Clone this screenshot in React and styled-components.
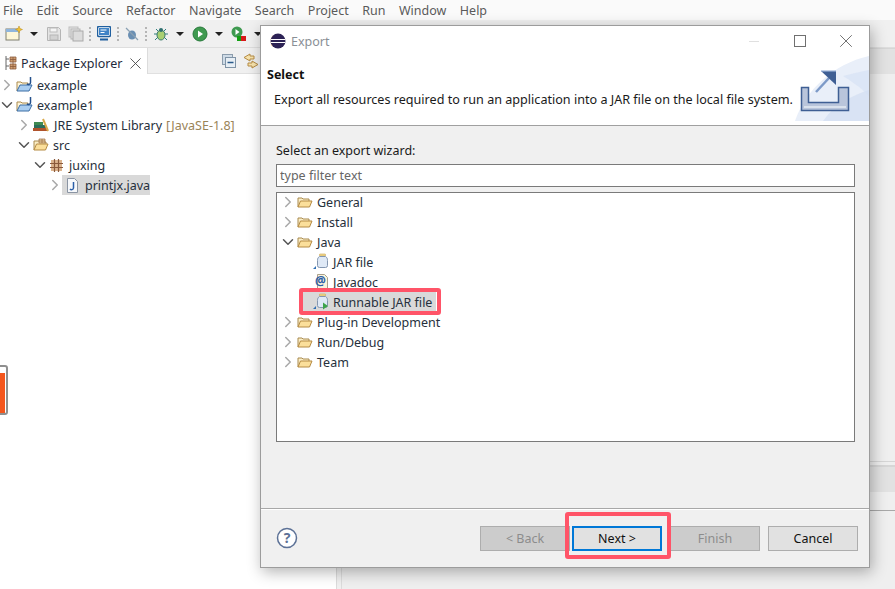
import styled, { createGlobalStyle } from "styled-components";
import { ChevronRight, ChevronDown, X } from "lucide-react";

const Global = createGlobalStyle`
  html, body { margin: 0; padding: 0; background: #fff; overflow: hidden; }
  body { font-family: "Noto Sans", "Open Sans", sans-serif; font-size: 12.5px; color: #1c1c1c; }
`

const Page = styled.div`
  position: relative;
  width: 895px;
  height: 589px;
  overflow: hidden;
  display: flex;
  flex-direction: column;
`
const MenuBar = styled.div`
  height: 20px;
  display: flex;
  align-items: center;
  padding-left: 3px;
  gap: 13.5px;
  background: #fafafa;
  color: #5a5a5a;
`
const Toolbar = styled.div`
  height: 28px;
  background: #f0f0f0;
  border-bottom: 1px solid #dedede;
  display: flex;
  align-items: center;
  padding-left: 5px;
  box-sizing: border-box;
`
const ToolIcon = styled.svg`
  flex: none;
  margin-right: ${({ $gap }) => $gap ?? 0}px;
`
const Caret = styled.span`
  flex: none;
  width: 0;
  height: 0;
  border-left: 4px solid transparent;
  border-right: 4px solid transparent;
  border-top: 4px solid #222;
  margin: 0 8px 0 7px;
`
const Grip = styled.span`
  flex: none;
  width: 2px;
  height: 14px;
  margin: 0 6px 0 5px;
  background: repeating-linear-gradient(#b5b5b5 0 2px, transparent 2px 4px);
`
const Workbench = styled.div`
  flex: 1;
  display: flex;
  min-height: 0;
`
const LeftPane = styled.div`
  width: 336px;
  flex: none;
  display: flex;
  flex-direction: column;
`
const Sash = styled.div`
  width: 6px;
  flex: none;
  box-sizing: border-box;
  background: #f0f0f0;
  border-left: 1px solid #dcdcdc;
  border-right: 1px solid #dcdcdc;
`
const TabStrip = styled.div`
  height: 26px;
  flex: none;
  background: #f0f0f0;
  border-bottom: 1px solid #e0e0e0;
  display: flex;
  box-sizing: border-box;
`
const Tab = styled.div`
  width: 148px;
  height: 26px;
  box-sizing: border-box;
  background: #fff;
  border-right: 1px solid #dcdcdc;
  display: flex;
  align-items: center;
  padding: 4px 0 0 5px;
  gap: 4px;
  color: #1f2a3a;
`
const TabActions = styled.div`
  margin-left: 74px;
  display: flex;
  align-items: center;
  gap: 7px;
`
const ExplorerTree = styled.div`
  padding-top: 1px;
`
const RightPane = styled.div`
  flex: 1;
  background: #efefef;
  display: flex;
  flex-direction: column;
`
const Band = styled.div`
  height: 26px;
  flex: none;
  box-sizing: border-box;
  background: #e2e2e2;
  border-top: 1px solid #d6d6d6;
`
const Filler = styled.div`
  flex: 1;
`
const LowerStrip = styled.div`
  height: 5px;
  flex: none;
  border-top: 1px solid #d6d6d6;
  border-bottom: 1px solid #d6d6d6;
  box-sizing: border-box;
`
const LowerGap = styled.div`
  height: 19px;
  flex: none;
  box-sizing: border-box;
  border-bottom: 1px solid #a8a8a8;
`
const LowerRest = styled.div`
  height: 78px;
  flex: none;
`
const Row = styled.div`
  height: 20px;
  display: flex;
  align-items: center;
  padding-left: ${({ $left }) => $left}px;
  white-space: nowrap;
  color: #26303c;
`
const Twisty = styled.span`
  width: 14px;
  height: 14px;
  flex: none;
  display: flex;
  align-items: center;
  justify-content: center;
  color: ${({ $open }) => ($open ? "#555" : "#a8a8a8")};
  svg { flex: none; }
`
const Selected = styled.span`
  display: flex;
  align-items: center;
  height: 20px;
  gap: ${({ $gap }) => $gap ?? 4}px;
  padding: 0 ${({ $end }) => $end ?? 4}px 0 ${({ $pad }) => $pad ?? 2}px;
  background: ${({ $on }) => ($on ? "#d9d9d9" : "transparent")};
`
const Qualifier = styled.span`
  color: #9a8458;
  margin-left: 4px;
`
const Dialog = styled.div`
  position: absolute;
  left: 260px;
  top: 25px;
  width: 610px;
  height: 543px;
  box-sizing: border-box;
  background: #f0f0f0;
  border: 1px solid #9c9c9c;
  box-shadow: 2px 4px 14px rgba(0, 0, 0, 0.3);
  display: flex;
  flex-direction: column;
`
const TitleBar = styled.div`
  height: 30px;
  flex: none;
  background: #fff;
  display: flex;
  align-items: center;
  padding-left: 9px;
  gap: 5px;
  color: #8a8f96;
`
const WindowButtons = styled.div`
  margin-left: auto;
  display: flex;
  align-items: center;
  color: #666;
`
const WindowButton = styled.span`
  width: 46px;
  height: 30px;
  display: flex;
  align-items: center;
  justify-content: center;
`
const MinLine = styled.span`
  width: 10px;
  height: 1px;
  background: #e0e0e0;
`
const MaxBox = styled.span`
  width: 10px;
  height: 10px;
  border: 1px solid #707070;
`
const Banner = styled.div`
  position: relative;
  height: 70px;
  flex: none;
  box-sizing: border-box;
  background: #fff;
  border-bottom: 1px solid #a0a0a0;
  padding: 10px 0 0 6px;
  overflow: hidden;
`
const BannerTitle = styled.div`
  font-weight: 700;
  color: #111;
  line-height: 18px;
`
const BannerText = styled.div`
  margin: 7px 0 0 7px;
  font-size: 12.6px;
  line-height: 18px;
  white-space: nowrap;
  color: #1a1a1a;
`
const BannerArt = styled.svg`
  position: absolute;
  right: 0;
  top: 0;
`
const Content = styled.div`
  flex: 1;
  min-height: 0;
  display: flex;
  flex-direction: column;
  padding: 16px 14px 0 15px;
`
const FieldLabel = styled.div`
  height: 18px;
  line-height: 18px;
  color: #1a1a1a;
`
const Filter = styled.input`
  height: 23px;
  box-sizing: border-box;
  margin-top: 4px;
  padding: 0 3px;
  border: 1px solid #7a7a7a;
  background: #fff;
  font: inherit;
  outline: none;
  &::placeholder { color: #666; opacity: 1; }
`
const WizardTree = styled.div`
  position: relative;
  height: 250px;
  margin-top: 5px;
  box-sizing: border-box;
  flex: none;
  border: 1px solid #7a7a7a;
  background: #fff;
`
const WizardRows = styled.div`
  margin-top: -1px;
`
const Highlight = styled.span`
  position: absolute;
  box-sizing: border-box;
  border: 4px solid #ff5468;
  border-radius: 3px;
  pointer-events: none;
`
const RunnableMark = styled(Highlight)`
  left: -4px;
  right: -5px;
  top: -4px;
  bottom: -3px;
`
const NextMark = styled(Highlight)`
  left: -9px;
  right: -11px;
  top: -16px;
  bottom: -10px;
`
const RowAnchor = styled.span`
  position: relative;
  display: flex;
`
const Footer = styled.div`
  height: 59px;
  flex: none;
  box-sizing: border-box;
  border-top: 1px solid #a8a8a8;
  display: flex;
  align-items: center;
  padding: 0 11px 0 15px;
  box-shadow: inset 0 1px 0 #fff;
`
const Help = styled.svg`
  margin-right: auto;
`
const Buttons = styled.div`
  display: flex;
  margin-top: 1px;
`
const Button = styled.button`
  position: relative;
  z-index: ${({ $primary }) => ($primary ? 1 : 0)};
  width: 90px;
  height: 25px;
  padding: 0;
  margin-left: ${({ $gap }) => $gap ?? 8}px;
  font: inherit;
  border-radius: 0;
  border: ${({ $primary }) => ($primary ? "2px solid #0078d7" : "1px solid #adadad")};
  background: ${({ disabled }) => (disabled ? "#cccccc" : "#e1e1e1")};
  color: ${({ disabled }) => (disabled ? "#8c8c8c" : "#111")};
`
const SideTab = styled.div`
  position: absolute;
  left: -4px;
  top: 365px;
  width: 8px;
  height: 46px;
  background: #fff;
  border: 2px solid #8f8f8f;
  border-radius: 3px;
  &::before {
    content: "";
    position: absolute;
    left: 0;
    width: 7px;
    top: 6px;
    bottom: 0;
    background: #f4561d;
  }
`

const FolderOpen = () => (
  <svg width="16" height="14" viewBox="0 0 16 14">
    <path d="M1 12V3h4l1 1h6v2" fill="#fbeec6" stroke="#a98a4e" />
    <path d="M1 12l2.500-6H15l-2.500 6z" fill="#fbdf9b" stroke="#b58b44" />
  </svg>
)
const ProjectFolder = () => (
  <svg width="18" height="16" viewBox="0 0 18 16">
    <path d="M1 14V5h4l1 1h6v2" fill="#fff4d6" stroke="#a98a4e" />
    <path d="M1 14l3-6h12l-3 6z" fill="#a9cdf0" stroke="#3d6ea5" />
    <path d="M14.500 0v5.500a2 2 0 0 1-3.500 1.300" fill="none" stroke="#24508c" strokeWidth="1.500" />
  </svg>
)
const Library = () => (
  <svg width="17" height="14" viewBox="0 0 17 14">
    <rect x="0" y="10" width="15" height="3" fill="#b0532c" />
    <rect x="1" y="7" width="12" height="3" fill="#2c6d5b" />
    <rect x="1" y="4" width="9" height="3" fill="#3f8a52" />
    <path d="M10 1l5 12" stroke="#d9a94a" strokeWidth="2" />
  </svg>
)
const SrcFolder = () => (
  <svg width="16" height="14" viewBox="0 0 16 14">
    <path d="M1 12V3h5l1 1h6v2" fill="#fbeec6" stroke="#a98a4e" />
    <path d="M6 1h6v4H6zM9 1v4M6 3h6" fill="#e9d3a6" stroke="#9b6b3f" strokeWidth=".7" />
    <path d="M1 12l2.500-6H15l-2.500 6z" fill="#fbdf9b" stroke="#b58b44" />
  </svg>
)
const PackageIcon = () => (
  <svg width="13" height="13" viewBox="0 0 13 13">
    <rect x="1" y="1" width="11" height="11" fill="#dcb48e" />
    <path d="M0 4.500h13M0 8.500h13M4.500 0v13M8.500 0v13" stroke="#8a5a3c" strokeWidth="1.200" />
  </svg>
)
const JavaFile = () => (
  <svg width="13" height="15" viewBox="0 0 13 15">
    <path d="M1.500.5h7l3 3v11h-10z" fill="#f6f8fb" stroke="#8a94a3" />
    <path d="M7.500 4v6a2 2 0 0 1-3.500 1" fill="none" stroke="#2a5ea8" strokeWidth="1.500" />
  </svg>
)
const JarIcon = ({ $run }) => (
  <svg width="16" height="18" viewBox="0 0 16 18">
    <path d="M0 16l3-3v3z" fill="#2f6fb3" />
    <rect x="6.500" y="1" width="6" height="2" rx=".5" fill="#f2d98f" stroke="#c9a552" strokeWidth=".6" />
    <path d="M6.500 3.500h6c1.500 1 2 2 2 4v5a2 2 0 0 1-2 2h-6a2 2 0 0 1-2-2v-5c0-2 .5-3 2-4z" fill="#dfe9f6" stroke="#8396b0" />
    {$run && <path d="M10 9.500v7l5-3.500z" fill="#3da34a" />}
  </svg>
)
const JavadocIcon = () => (
  <svg width="16" height="18" viewBox="0 0 16 18">
    <path d="M4.500 1.500h7l3 3v11h-10z" fill="#fbf3dc" stroke="#a9a08a" />
    <text x="7.500" y="12" textAnchor="middle" fontSize="12" fontWeight="700" fill="#2a5ea8" fontFamily="Noto Sans">@</text>
    <path d="M1 16.500h8" stroke="#2f6fb3" strokeWidth="1.500" />
  </svg>
)

const Open = () => <ChevronDown size={18} strokeWidth={2} />
const Closed = () => <ChevronRight size={18} strokeWidth={2} />

const Node = ({ left, open, icon, children, on, gap, pad, end }) => (
  <Row $left={left}>
    <Twisty $open={open}>{open === undefined ? null : open ? <Open /> : <Closed />}</Twisty>
    <Selected $on={on} $gap={gap} $pad={pad} $end={end}>
      {icon}
      <span>{children}</span>
    </Selected>
  </Row>
)

const menus = ["File", "Edit", "Source", "Refactor", "Navigate", "Search", "Project", "Run", "Window", "Help"];
const groups = [
  ["General", false],
  ["Install", false],
  ["Java", true],
];
const lastGroups = ["Plug-in Development", "Run/Debug", "Team"];

export default function App() {
  return (
    <Page>
      <Global />
      <MenuBar>
        {menus.map((m) => <span key={m}>{m}</span>)}
      </MenuBar>
      <Toolbar>
        <ToolIcon width="18" height="16" viewBox="0 0 18 16">
          <rect x="1" y="3" width="13" height="11" fill="#fdf6d8" stroke="#7f7f6f" />
          <rect x="1" y="3" width="13" height="3" fill="#8fb5dd" />
          <path d="M14 0l1 2.500 2.500 1-2.500 1-1 2.500-1-2.500-2.500-1 2.500-1z" fill="#f1c232" stroke="#b88a1a" strokeWidth=".5" />
        </ToolIcon>
        <Caret />
        <ToolIcon width="16" height="16" viewBox="0 0 16 16" $gap={6}>
          <path d="M1.500 1.500h11l2 2v11h-13z" fill="#e4e4e4" stroke="#b5b5b5" />
          <rect x="4" y="2" width="7" height="4" fill="#f5f5f5" stroke="#bbb" />
          <rect x="4" y="9" width="8" height="5" fill="#d2d2d2" stroke="#b5b5b5" />
        </ToolIcon>
        <ToolIcon width="16" height="16" viewBox="0 0 16 16">
          <rect x="1" y="1" width="9" height="10" fill="#e4e4e4" stroke="#bdbdbd" />
          <rect x="3" y="3" width="9" height="10" fill="#e4e4e4" stroke="#b5b5b5" />
          <rect x="5" y="5" width="10" height="10" fill="#dcdcdc" stroke="#aaa" />
        </ToolIcon>
        <Grip />
        <ToolIcon width="14" height="15" viewBox="0 0 14 15" $gap={1}>
          <rect x=".5" y=".5" width="13" height="10" rx="1.500" fill="#fff" stroke="#1f5f9f" strokeWidth="1.500" />
          <rect x="2" y="2" width="10" height="7" fill="#3f83c6" />
          <path d="M3.500 4h6M3.500 6.500h4" stroke="#fff" />
          <path d="M3 13.500h8" stroke="#1f5f9f" strokeWidth="2" />
        </ToolIcon>
        <Grip />
        <ToolIcon width="14" height="14" viewBox="0 0 14 14" $gap={1}>
          <ellipse cx="7" cy="8" rx="4" ry="4.500" fill="#6a8fb3" />
          <path d="M1 1l12 12" stroke="#8aa0b3" strokeWidth="1.200" />
        </ToolIcon>
        <Grip />
        <ToolIcon width="16" height="16" viewBox="0 0 16 16">
          <path d="M3 3l3 3M13 3l-3 3M1 8h3M12 8h3M2 14l3-3M14 14l-3-3" stroke="#2f7f7f" />
          <ellipse cx="8" cy="9" rx="4" ry="5" fill="#a8cf72" stroke="#3a7a6a" />
          <circle cx="8" cy="4" r="2" fill="#2f6f6f" />
        </ToolIcon>
        <Caret />
        <ToolIcon width="16" height="16" viewBox="0 0 16 16">
          <circle cx="8" cy="8" r="7" fill="#3f9a50" stroke="#27793a" />
          <path d="M6 4.500v7l5-3.500z" fill="#fff" />
        </ToolIcon>
        <Caret />
        <ToolIcon width="16" height="16" viewBox="0 0 16 16">
          <circle cx="6" cy="6" r="5.500" fill="#3f9a50" />
          <path d="M4.500 3v6l4-3z" fill="#fff" />
          <rect x="6" y="10" width="9" height="5" fill="#d81818" />
          <rect x="6" y="10" width="4" height="5" fill="#12a012" />
        </ToolIcon>
        <Caret />
      </Toolbar>
      <Workbench>
        <LeftPane>
          <TabStrip>
            <Tab>
              <svg width="12" height="14" viewBox="0 0 12 14">
                <path d="M1 0v14M1 3h3M1 10h3" stroke="#666" fill="none" />
                <path d="M5 1h6v5H5zM5 8h6v5H5zM8 1v12M5 3.500h6M5 10.500h6" fill="#cf9f72" stroke="#8a5a3c" strokeWidth=".8" />
              </svg>
              <span>Package Explorer</span>
              <X size={19} strokeWidth={1.100} color="#444" />
            </Tab>
            <TabActions>
              <svg width="14" height="14" viewBox="0 0 14 14">
                <rect x=".5" y=".5" width="10" height="10" fill="#cfdbe6" stroke="#8b9cac" />
                <rect x="3.500" y="3.500" width="10" height="10" fill="#e7eef4" stroke="#7f93a6" />
                <path d="M5.500 8.500h6" stroke="#2a5a8a" strokeWidth="1.500" />
              </svg>
              <svg width="16" height="16" viewBox="0 0 16 16">
                <path d="M7 1L1 4.500 7 8V6h4V3H7zM9 8l6 3.500L9 15v-2H5v-3h4z" fill="#f7e3ad" stroke="#b58b44" />
              </svg>
            </TabActions>
          </TabStrip>
          <ExplorerTree>
            <Node left={0} open={false} gap={3} icon={<ProjectFolder />}>example</Node>
            <Node left={0} open gap={3} icon={<ProjectFolder />}>example1</Node>
            <Node left={17} open={false} gap={4} icon={<Library />}>
              JRE System Library<Qualifier>[JavaSE-1.8]</Qualifier>
            </Node>
            <Node left={17} open gap={4} icon={<SrcFolder />}>src</Node>
            <Node left={33} open gap={6} pad={3} icon={<PackageIcon />}>juxing</Node>
            <Node left={48} open={false} on gap={6} pad={4} end={0} icon={<JavaFile />}>printjx.java</Node>
          </ExplorerTree>
        </LeftPane>
        <Sash />
        <RightPane>
          <Band />
          <Filler />
          <LowerStrip />
          <Band />
          <LowerGap />
          <LowerRest />
        </RightPane>
      </Workbench>
      <SideTab />
      <Dialog>
        <TitleBar>
          <svg width="16" height="16" viewBox="0 0 16 16">
            <circle cx="8" cy="8" r="7.500" fill="#2c2255" />
            <path d="M.5 8a7.500 7.500 0 0 1 3-6A8 8 0 0 0 3 14 7.500 7.500 0 0 1 .5 8z" fill="#f7941e" />
            <path d="M1 6.500h14M1 9.500h14" stroke="#fff" strokeWidth="1.200" />
          </svg>
          <span>Export</span>
          <WindowButtons>
            <WindowButton><MinLine /></WindowButton>
            <WindowButton><MaxBox /></WindowButton>
            <WindowButton><X size={22} strokeWidth={1} /></WindowButton>
          </WindowButtons>
        </TitleBar>
        <Banner>
          <BannerTitle>Select</BannerTitle>
          <BannerText>Export all resources required to run an application into a JAR file on the local file system.</BannerText>
          <BannerArt width="76" height="65" viewBox="0 0 76 65">
            <path d="M2 65C12 35 40 8 76 0V65z" fill="#e9eff9" />
            <path d="M30 65C42 48 58 40 76 34V65z" fill="#d4e0f3" opacity=".8" />
            <path d="M50 20C58 18 66 16 76 14V40C66 30 58 25 50 20z" fill="#d4e0f3" opacity=".6" />
            <path d="M8.500 31.500H15.500V46.500H45.500V31.500H55.500V54.500H8.500Z" fill="#b9c5db" stroke="#3f5f94" strokeWidth="1.500" />
            <path d="M11 51h42" stroke="#e6ebf3" strokeWidth="1.500" />
            <path d="M23 36l13-14" stroke="#7d9ac8" strokeWidth="2.500" />
            <path d="M28 15h15v14z" fill="#3f5f94" />
            <path d="M28 15h15" stroke="#9db4d8" strokeWidth="1.200" />
          </BannerArt>
        </Banner>
        <Content>
          <FieldLabel>Select an export wizard:</FieldLabel>
          <Filter placeholder="type filter text" />
          <WizardTree>
            <WizardRows>
              {groups.map(([name, open]) => (
                <Node key={name} left={4} open={open} icon={<FolderOpen />}>{name}</Node>
              ))}
              <Node left={18} gap={4} pad={4} icon={<JarIcon />}>JAR file</Node>
              <Node left={18} gap={4} pad={4} icon={<JavadocIcon />}>Javadoc</Node>
              <Row $left={26}>
                <RowAnchor>
                  <Selected $on $gap={4} $pad={10}>
                    <JarIcon $run />
                    <span>Runnable JAR file</span>
                  </Selected>
                  <RunnableMark />
                </RowAnchor>
              </Row>
              {lastGroups.map((name) => (
                <Node key={name} left={4} open={false} icon={<FolderOpen />}>{name}</Node>
              ))}
            </WizardRows>
          </WizardTree>
        </Content>
        <Footer>
          <Help width="22" height="22" viewBox="0 0 22 22">
            <circle cx="11" cy="11" r="9.500" fill="#fff" stroke="#5c7196" strokeWidth="1.500" />
            <text x="11" y="16" textAnchor="middle" fontSize="14" fontWeight="700" fill="#5c7196" fontFamily="Noto Sans">?</text>
          </Help>
          <Buttons>
            <Button disabled $gap={0}>&lt; Back</Button>
            <Button $primary $gap={2}>
              Next &gt;
              <NextMark />
            </Button>
            <Button disabled>Finish</Button>
            <Button>Cancel</Button>
          </Buttons>
        </Footer>
      </Dialog>
    </Page>
  );
}
